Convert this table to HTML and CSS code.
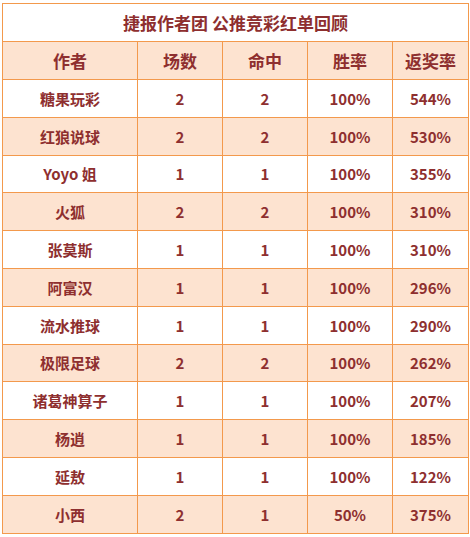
FILE: index.html
```html
<!DOCTYPE html>
<html lang="zh-CN">
<head>
<meta charset="utf-8">
<title>捷报作者团 公推竞彩红单回顾</title>
<link rel="stylesheet" href="styles.css">
</head>
<body>
<table class="board">
  <colgroup>
    <col class="c-name"><col class="c-num"><col class="c-num"><col class="c-num"><col class="c-ret">
  </colgroup>
  <thead>
    <tr class="title-row"><th colspan="5">捷报作者团 公推竞彩红单回顾</th></tr>
    <tr class="head-row"><th>作者</th><th>场数</th><th>命中</th><th>胜率</th><th>返奖率</th></tr>
  </thead>
  <tbody>
    <tr><td>糖果玩彩</td><td>2</td><td>2</td><td>100%</td><td>544%</td></tr>
    <tr><td>红狼说球</td><td>2</td><td>2</td><td>100%</td><td>530%</td></tr>
    <tr><td>Yoyo 姐</td><td>1</td><td>1</td><td>100%</td><td>355%</td></tr>
    <tr><td>火狐</td><td>2</td><td>2</td><td>100%</td><td>310%</td></tr>
    <tr><td>张莫斯</td><td>1</td><td>1</td><td>100%</td><td>310%</td></tr>
    <tr><td>阿富汉</td><td>1</td><td>1</td><td>100%</td><td>296%</td></tr>
    <tr><td>流水推球</td><td>1</td><td>1</td><td>100%</td><td>290%</td></tr>
    <tr><td>极限足球</td><td>2</td><td>2</td><td>100%</td><td>262%</td></tr>
    <tr><td>诸葛神算子</td><td>1</td><td>1</td><td>100%</td><td>207%</td></tr>
    <tr><td>杨逍</td><td>1</td><td>1</td><td>100%</td><td>185%</td></tr>
    <tr><td>延敖</td><td>1</td><td>1</td><td>100%</td><td>122%</td></tr>
    <tr><td>小西</td><td>2</td><td>1</td><td>50%</td><td>375%</td></tr>
  </tbody>
</table>
</body>
</html>
```
FILE: styles.css
```css
html, body {
  margin: 0;
  background: #ffffff;
}
body {
  padding: 3px 0 0 2px;
  font-family: "Noto Sans CJK SC", "Noto Sans", sans-serif;
  color: #8e2f2f;
}
.board {
  border-collapse: collapse;
  table-layout: fixed;
  width: 466px;
}
.c-name { width: 135px; }
.c-num { width: 85px; }
.c-ret { width: 76px; }
.board th, .board td {
  border: 1px solid #f3994c;
  text-align: center;
  vertical-align: middle;
  padding: 0;
  font-weight: bold;
  line-height: 1;
}
.title-row th {
  height: 37px;
  font-size: 17px;
  background: #ffffff;
}
.head-row th {
  height: 37px;
  font-size: 17px;
  background: #fde3d0;
}
.board td {
  height: 36.8px;
  font-size: 15px;
}
.board tbody tr:nth-child(even) td {
  background: #fde3d0;
}
```
